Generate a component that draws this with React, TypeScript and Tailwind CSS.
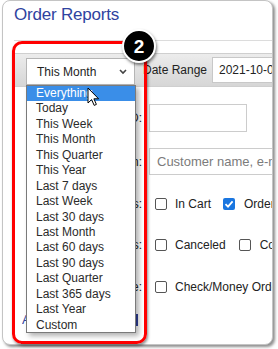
import React from "react";

const items = [
  "Everything",
  "Today",
  "This Week",
  "This Month",
  "This Quarter",
  "This Year",
  "Last 7 days",
  "Last Week",
  "Last 30 days",
  "Last Month",
  "Last 60 days",
  "Last 90 days",
  "Last Quarter",
  "Last 365 days",
  "Last Year",
  "Custom",
];

function Box({ checked = false }: { checked?: boolean }) {
  return checked ? (
    <div className="w-[12px] h-[12px] rounded-[2px] bg-[#1a76e0] flex items-center justify-center shrink-0">
      <svg width="10" height="10" viewBox="0 0 10 10">
        <path d="M1.5 5.2 L4 7.6 L8.6 2.4" stroke="white" strokeWidth="1.8" fill="none" />
      </svg>
    </div>
  ) : (
    <div className="w-[12px] h-[12px] rounded-[2px] border border-[#555] bg-white shrink-0" />
  );
}

export default function App() {
  return (
    <div className="relative w-[278px] h-[349px] bg-white overflow-hidden font-['Liberation_Sans',Arial,sans-serif] text-[12px] text-[#222]">
      {/* Card */}
      <div className="ml-[2px] w-[271px] h-[345px] rounded-[8px] border border-[#c4c4c4] bg-white overflow-hidden shadow-[2px_2px_3px_rgba(0,0,0,0.45)] flex flex-col">
        <div className="pl-[11px] pt-[4px] h-[24px] text-[17px] leading-[20px] text-[#2f43a0] tracking-[-0.2px]">
          Order Reports
        </div>
        <div className="ml-[11px] mt-[15px] h-px bg-[#dcdcdc] shrink-0" />
        <div className="ml-[11px] mt-[12px] h-[34px] shrink-0 bg-gradient-to-b from-[#ececec] to-[#d6d6d6] border-y border-[#cfcfcf] flex items-center pl-[12px]">
          <div className="w-[109px] h-[27px] mt-[3px] bg-white border border-[#b5b5b5] flex items-center pl-[10px] pr-[7px] shrink-0">
            <span className="flex-1">This Month</span>
            <svg width="8" height="6" viewBox="0 0 8 6">
              <path d="M1 1 L4 4 L7 1" stroke="#444" strokeWidth="1.6" fill="none" />
            </svg>
          </div>
          <span className="ml-[8px] w-[69px] shrink-0 whitespace-nowrap">Date Range</span>
          <div className="w-[100px] h-[26px] bg-white border border-[#c8c8c8] flex items-center pl-[6px] shrink-0">
            2021-10-01
          </div>
        </div>
        {/* Rows */}
        <div className="flex items-center mt-[17px] h-[28px] shrink-0">
          <span className="ml-[11px] w-[128px] text-right shrink-0">Order ID:</span>
          <div className="ml-[7px] w-[98px] h-[28px] border border-[#cccccc] bg-white" />
        </div>
        <div className="flex items-center mt-[16px] h-[27px] shrink-0">
          <span className="ml-[11px] w-[128px] text-right shrink-0">Search:</span>
          <div className="ml-[7px] flex-1 h-[27px] border border-[#cccccc] border-r-0 bg-white flex items-center pl-[7px] text-[13px] text-[#7b7b7b] whitespace-nowrap overflow-hidden">
            Customer name, e-mail
          </div>
        </div>
        <div className="flex items-center mt-[15px] h-[28px] shrink-0 whitespace-nowrap">
          <span className="ml-[11px] w-[128px] text-right shrink-0">Status:</span>
          <div className="ml-[13px]"><Box /></div>
          <span className="ml-[8px]">In Cart</span>
          <div className="ml-[12px]"><Box checked /></div>
          <span className="ml-[9px]">Orders</span>
        </div>
        <div className="flex items-center mt-[13px] h-[28px] shrink-0 whitespace-nowrap">
          <span className="ml-[11px] w-[128px] text-right shrink-0">Exclude Statuses:</span>
          <div className="ml-[13px]"><Box /></div>
          <span className="ml-[8px]">Canceled</span>
          <div className="ml-[13px]"><Box /></div>
          <span className="ml-[9px]">Completed</span>
        </div>
        <div className="flex items-center mt-[14px] h-[28px] shrink-0 whitespace-nowrap">
          <span className="ml-[11px] w-[128px] text-right shrink-0">Payment Type:</span>
          <div className="ml-[13px]"><Box /></div>
          <span className="ml-[8px]">Check/Money Order</span>
        </div>
        <div className="flex items-center mt-[12px] h-[14px] shrink-0">
          <span className="ml-[19px] w-[114px] text-[13px] text-[#2f43a0] whitespace-nowrap overflow-hidden">Apply Filters</span>
          <div className="w-[2px] h-[12px] bg-[#2f3f9a]" />
        </div>
        <div className="ml-[18px] mt-[16px] w-[70px] h-[20px] bg-[#22348f] shrink-0" />
      </div>

      {/* Red highlight box */}
      <div className="absolute left-[12px] top-[41px] w-[135px] h-[303px] border-[3px] border-[#ff0000] rounded-[10px] shadow-[1px_2px_3px_rgba(0,0,0,0.45)]" />

      {/* Dropdown list */}
      <div className="absolute left-[26px] top-[85px] w-[110px] h-[248px] bg-white border border-[#7a7a7a] shadow-[3px_3px_5px_rgba(0,0,0,0.3)] text-[#2b2b2b]">
        {items.map((it, i) => (
          <div
            key={it}
            className={
              i === 0
                ? "h-[15.44px] leading-[15.44px] pl-[9px] bg-[#3a8ee8] text-white whitespace-nowrap"
                : "h-[15.44px] leading-[15.44px] pl-[9px] whitespace-nowrap"
            }
          >
            {it}
          </div>
        ))}
      </div>

      {/* Cursor */}
      <svg className="absolute left-[87px] top-[87px]" width="13" height="20" viewBox="0 0 13 20">
        <path d="M1 1 L1 16 L4.6 12.6 L7.2 18.4 L9.4 17.4 L6.9 11.8 L11.6 11.8 Z" fill="white" stroke="black" strokeWidth="1" strokeLinejoin="round" />
      </svg>

      {/* Step badge */}
      <div className="absolute left-[122px] top-[29px] w-[34px] h-[34px] rounded-full bg-black border-2 border-white shadow-[1px_2px_3px_rgba(0,0,0,0.5)] flex items-center justify-center text-white font-bold text-[19px] leading-none">
        2
      </div>
    </div>
  );
}
